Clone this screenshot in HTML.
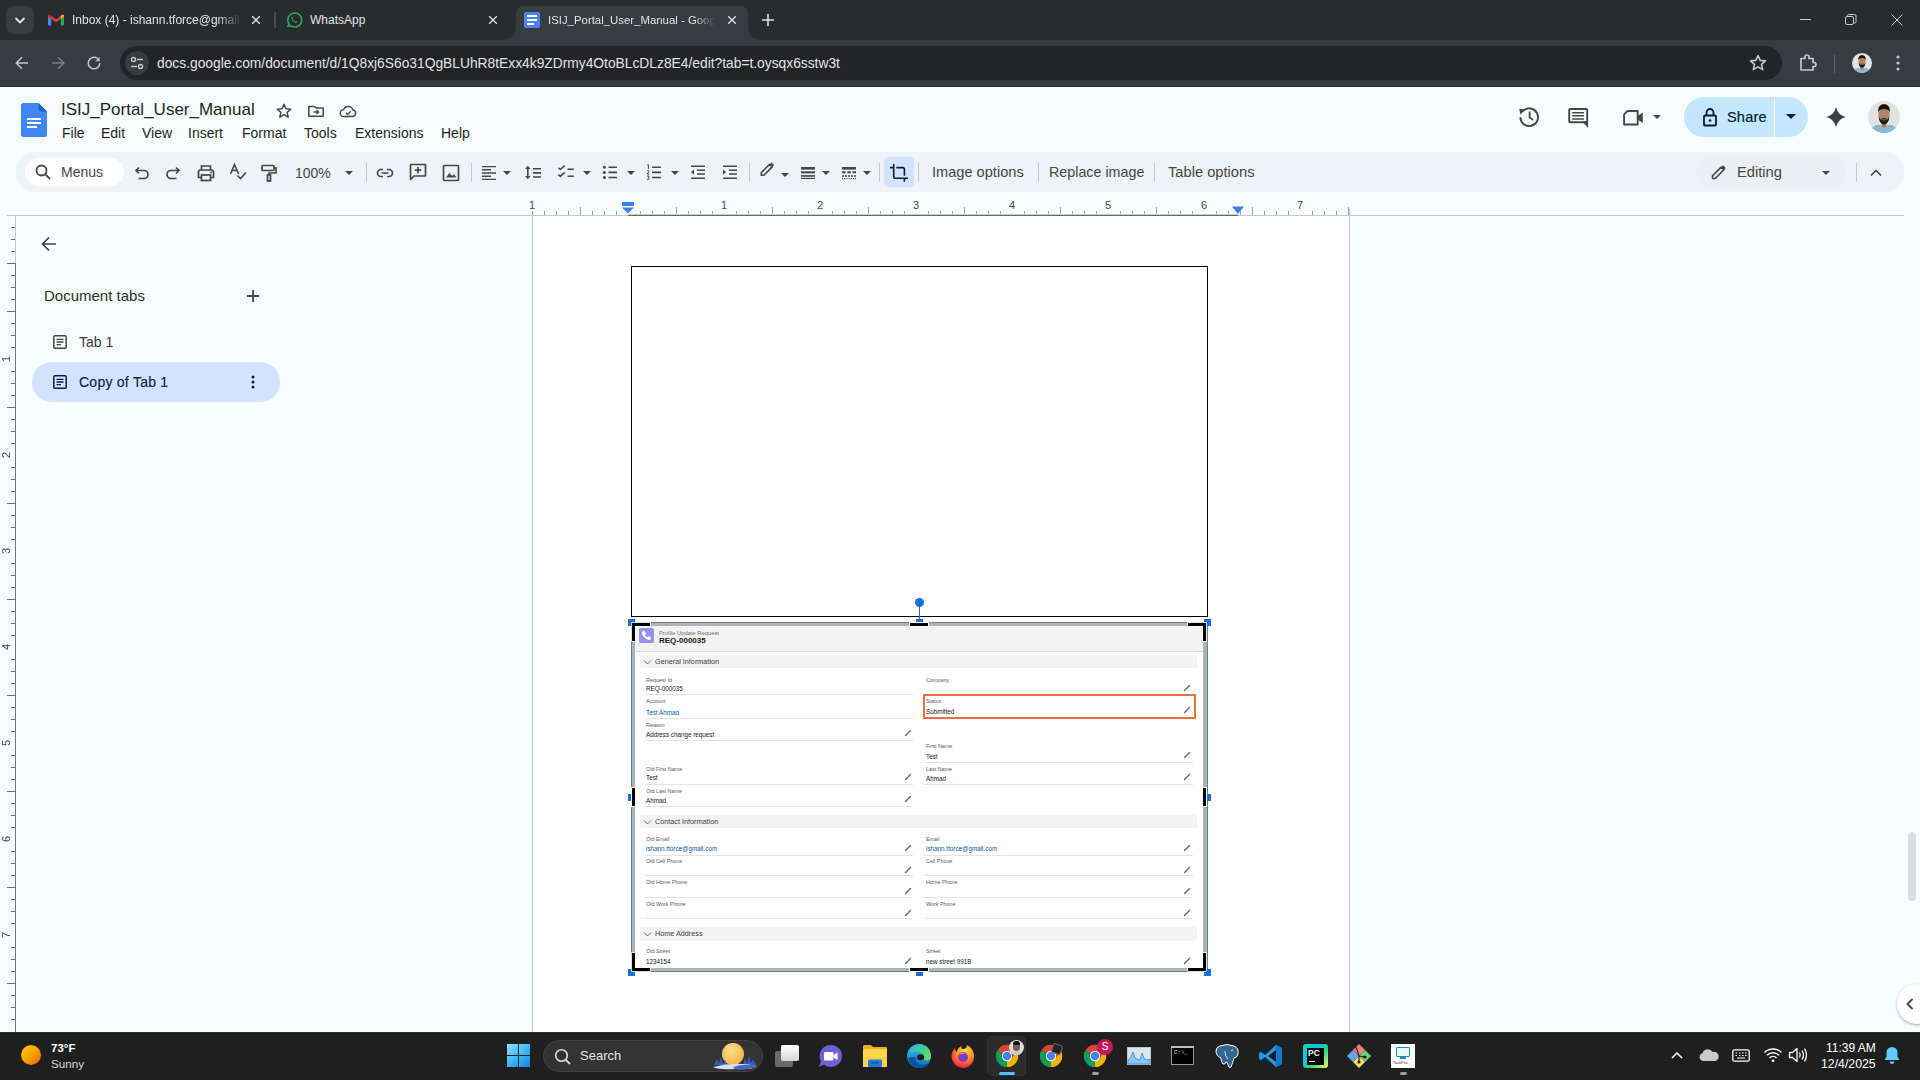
<!DOCTYPE html>
<html><head><meta charset="utf-8">
<style>
*{margin:0;padding:0;box-sizing:border-box}
html,body{width:1920px;height:1080px;overflow:hidden;background:#f9fbfd;font-family:"Liberation Sans",sans-serif}
.a{position:absolute}
svg{position:absolute;overflow:visible}
#titlebar{left:0;top:0;width:1920px;height:40px;background:#292c2f}
#toolbar{left:0;top:40px;width:1920px;height:47px;background:#383b40}
.tabtxt{font-size:12px;color:#e3e3e3;white-space:nowrap;overflow:hidden;top:12px;line-height:16px}
.menu{font-size:14px;color:#1f1f1f;top:125px;line-height:16px}
.rn{font-size:11px;line-height:12px;width:20px;text-align:center;color:#444746}
.vn{font-size:11px;line-height:12px;width:12px;height:20px;text-align:center;color:#444746;writing-mode:vertical-rl;transform:rotate(180deg)}
.tb{font-size:14px;color:#444746;line-height:16px}
</style></head><body>
<!-- CHROME TITLE BAR -->
<div id="titlebar" class="a"></div>
<div class="a" style="left:6px;top:6px;width:28px;height:28px;border-radius:8px;background:#3a3b3d"></div>
<svg style="left:0;top:0" width="40" height="40"><path d="M15.5 18 L20 22.5 L24.5 18" stroke="#e8eaed" stroke-width="1.8" fill="none"/></svg>

<!-- tab 1 gmail -->
<svg style="left:48px;top:14px" width="16" height="12" viewBox="0 0 16 12">
<path d="M0 2.2Q0 .6 1.4 .9L3.2 2.3V11.5H.9Q0 11.5 0 10.6Z" fill="#4285f4"/>
<path d="M16 2.2Q16 .6 14.6 .9L12.8 2.3V11.5H15.1Q16 11.5 16 10.6Z" fill="#34a853"/>
<path d="M.3 1.2Q1 .3 2 1L8 5.6L14 1Q15 .3 15.7 1.2L16 2.2L8 8.3L0 2.2Z" fill="#ea4335"/>
<path d="M12.8 2L14 1Q15 .3 15.7 1.2L16 2.2L12.8 4.6Z" fill="#fbbc04"/>
<path d="M0 2.2L.3 1.2Q1 .3 2 1L3.2 2V4.6Z" fill="#c5221f"/>
</svg>
<div class="a tabtxt" style="left:72px;width:170px;-webkit-mask-image:linear-gradient(90deg,#000 85%,transparent)">Inbox (4) - ishann.tforce@gmail.com</div>
<svg style="left:250px;top:14px" width="12" height="12"><path d="M2.2 2.2L9.8 9.8M9.8 2.2L2.2 9.8" stroke="#e3e3e3" stroke-width="1.3"/></svg>
<div class="a" style="left:274px;top:12px;width:2px;height:16px;background:#4a4d51"></div>
<!-- tab 2 whatsapp -->
<svg style="left:286px;top:12px" width="16" height="16" viewBox="0 0 16 16">
<path d="M3.2 12.2 A7 7 0 1 1 4.6 13.6 L1.8 14.4 Z" stroke="#25a85a" stroke-width="1.6" fill="none" stroke-linejoin="round"/>
<path d="M5.6 5.2c.3-.6.8-.6 1 0l.5 1.2c.1.3-.4.7-.4.9.4.9 1.2 1.7 2.1 2.1.2 0 .6-.5.9-.4l1.2.5c.5.3.4.8-.1 1.1-1.6 1-5.9-2.6-5.2-5.4z" fill="#25a85a"/>
</svg>
<div class="a tabtxt" style="left:310px;width:120px">WhatsApp</div>
<svg style="left:487px;top:14px" width="12" height="12"><path d="M2.2 2.2L9.8 9.8M9.8 2.2L2.2 9.8" stroke="#e3e3e3" stroke-width="1.3"/></svg>
<!-- active tab -->
<svg style="left:500px;top:6px" width="280" height="34" viewBox="0 0 280 34">
<path d="M0 34 Q16 34 16 20 V8 Q16 0 24 0 H240 Q248 0 248 8 V20 Q248 34 264 34 Z" fill="#383b40"/>
</svg>
<div class="a" style="left:524px;top:12px;width:16px;height:16px;border-radius:2px;background:#4a86e8"></div>
<div class="a" style="left:527px;top:15px;width:10px;height:2px;background:#fff"></div>
<div class="a" style="left:527px;top:19px;width:10px;height:2px;background:#fff"></div>
<div class="a" style="left:527px;top:23px;width:7px;height:2px;background:#fff"></div>
<div class="a tabtxt" style="left:548px;width:167px;font-size:11.4px;-webkit-mask-image:linear-gradient(90deg,#000 88%,transparent)">ISIJ_Portal_User_Manual - Google Docs</div>
<svg style="left:726px;top:14px" width="12" height="12"><path d="M2.2 2.2L9.8 9.8M9.8 2.2L2.2 9.8" stroke="#e3e3e3" stroke-width="1.3"/></svg>
<svg style="left:760px;top:12px" width="16" height="16"><path d="M8 2V14M2 8H14" stroke="#e3e3e3" stroke-width="1.6"/></svg>
<!-- window controls -->
<div class="a" style="left:1800px;top:19px;width:11px;height:1px;background:#c8c8c8"></div>
<svg style="left:1845px;top:14px" width="12" height="12"><rect x="0.5" y="2.5" width="8" height="8" rx="1.5" stroke="#c8c8c8" fill="none"/><path d="M2.5 2.5V1.8Q2.5 .5 3.8 .5H9.7Q11 .5 11 1.8V7.7Q11 9 9.7 9H9" stroke="#c8c8c8" fill="none"/></svg>
<svg style="left:1891px;top:14px" width="12" height="12"><path d="M.5 .5L11.5 11.5M11.5 .5L.5 11.5" stroke="#c8c8c8" stroke-width="1"/></svg>

<!-- CHROME TOOLBAR -->
<div id="toolbar" class="a"></div>
<div class="a" style="left:0;top:86px;width:1920px;height:1px;background:#2a2c30"></div>
<svg style="left:12px;top:53px" width="20" height="20"><path d="M16 10H4.5M10 4.2L4.2 10L10 15.8" stroke="#c7c7c7" stroke-width="1.5" fill="none"/></svg>
<svg style="left:48px;top:53px" width="20" height="20"><path d="M4 10H15.5M10 4.2L15.8 10L10 15.8" stroke="#7d7f83" stroke-width="1.5" fill="none"/></svg>
<svg style="left:84px;top:53px" width="20" height="20"><path d="M15.8 10A5.8 5.8 0 1 1 13.6 5.5" stroke="#c7c7c7" stroke-width="1.5" fill="none"/><path d="M15.6 3.8V8.2H11.2Z" fill="#c7c7c7"/></svg>
<div class="a" style="left:120px;top:46px;width:1662px;height:34px;border-radius:17px;background:#222428"></div>
<div class="a" style="left:125px;top:51px;width:24px;height:24px;border-radius:12px;background:#383b40"></div>
<svg style="left:129px;top:55px" width="16" height="16"><circle cx="4.5" cy="4.5" r="2" stroke="#c7c7c7" stroke-width="1.4" fill="none"/><path d="M8 4.5H14" stroke="#c7c7c7" stroke-width="1.4"/><circle cx="11.5" cy="11.5" r="2" stroke="#c7c7c7" stroke-width="1.4" fill="none"/><path d="M2 11.5H8" stroke="#c7c7c7" stroke-width="1.4"/></svg>
<div class="a" style="left:157px;top:55px;font-size:13.8px;line-height:17px;color:#e3e3e3;white-space:nowrap">docs.google.com/document/d/1Q8xj6S6o31QgBLUhR8tExx4k9ZDrmy4OtoBLcDLz8E4/edit?tab=t.oysqx6sstw3t</div>
<svg style="left:1748px;top:53px" width="20" height="20"><path d="M10 2.5L12.2 7.4L17.5 7.9L13.5 11.4L14.7 16.6L10 13.9L5.3 16.6L6.5 11.4L2.5 7.9L7.8 7.4Z" stroke="#c7c7c7" stroke-width="1.6" fill="none" stroke-linejoin="round"/></svg>
<svg style="left:1798px;top:53px" width="20" height="20"><path d="M3 5.5H7V4A2 2 0 0 1 11 4V5.5H15V9.5H16A2 2 0 0 1 16 13.5H15V17H3Z" stroke="#c7c7c7" stroke-width="1.7" fill="none" stroke-linejoin="round"/></svg>
<div class="a" style="left:1834px;top:55px;width:1px;height:18px;background:#5f6368"></div>
<svg style="left:1852px;top:53px" width="20" height="20" viewBox="0 0 32 32"><defs><clipPath id="c1852"><circle cx="16" cy="16" r="16"/></clipPath></defs><g clip-path="url(#c1852)"><rect width="32" height="32" fill="#e2e2e0"/><path d="M2 32Q3 25 10 23.5L16 26L22 23.5Q29 25 30 32Z" fill="#8db6d6"/><path d="M13.5 20H18.5V25L16 27L13.5 25Z" fill="#a57a60"/><ellipse cx="16" cy="14" rx="5.6" ry="7.5" fill="#b08468"/><path d="M10 12Q9.5 3.5 16 3Q22.5 3.5 22 12Q21 8 16 8Q11 8 10 12Z" fill="#17120f"/><path d="M10.6 15Q11 23 16 23.5Q21 23 21.4 15Q20.5 19 16 19.5Q11.5 19 10.6 15Z" fill="#241a15"/><path d="M13.5 18.2Q16 17.2 18.5 18.2" stroke="#241a15" stroke-width="1.2" fill="none"/></g></svg>
<svg style="left:1888px;top:53px" width="20" height="20"><circle cx="10" cy="4" r="1.6" fill="#c7c7c7"/><circle cx="10" cy="10" r="1.6" fill="#c7c7c7"/><circle cx="10" cy="16" r="1.6" fill="#c7c7c7"/></svg>

<!-- DOCS HEADER -->
<div class="a" style="left:0;top:87px;width:1920px;height:993px;background:#f7fcfc"></div>
<svg style="left:21px;top:103px" width="26" height="34" viewBox="0 0 26 34">
<path d="M2.5 0H17.5L26 8.5V31.5A2.5 2.5 0 0 1 23.5 34H2.5A2.5 2.5 0 0 1 0 31.5V2.5A2.5 2.5 0 0 1 2.5 0Z" fill="#4285f4"/>
<path d="M17.5 0V6A2.5 2.5 0 0 0 20 8.5H26Z" fill="#1f5fd6"/>
<rect x="6" y="15" width="14" height="2" fill="#fff"/><rect x="6" y="19" width="14" height="2" fill="#fff"/><rect x="6" y="23" width="10" height="2" fill="#fff"/>
</svg>
<div class="a" style="left:61px;top:100px;font-size:17px;line-height:20px;color:#1f1f1f">ISIJ_Portal_User_Manual</div>
<svg style="left:275px;top:102px" width="18" height="18"><path d="M9 2.2L10.9 6.8L15.8 7.2L12.1 10.4L13.2 15.2L9 12.7L4.8 15.2L5.9 10.4L2.2 7.2L7.1 6.8Z" stroke="#444746" stroke-width="1.5" fill="none" stroke-linejoin="round"/></svg>
<svg style="left:307px;top:102px" width="18" height="18"><path d="M1.8 4.5V14.2H16.2V6H9L7.5 4.5Z" stroke="#444746" stroke-width="1.5" fill="none" stroke-linejoin="round"/><path d="M6.5 10H11.5M9.5 8L11.5 10L9.5 12" stroke="#444746" stroke-width="1.4" fill="none"/></svg>
<svg style="left:339px;top:102px" width="18" height="18"><path d="M5 14.5A3.5 3.5 0 0 1 4.6 7.5A5 5 0 0 1 14 8A3.3 3.3 0 0 1 13.8 14.5Z" stroke="#444746" stroke-width="1.5" fill="none"/><path d="M6.8 10.8L8.6 12.5L11.8 9.2" stroke="#444746" stroke-width="1.4" fill="none"/></svg>
<div class="a menu" style="left:62px">File</div>
<div class="a menu" style="left:101px">Edit</div>
<div class="a menu" style="left:142px">View</div>
<div class="a menu" style="left:188px">Insert</div>
<div class="a menu" style="left:242px">Format</div>
<div class="a menu" style="left:304px">Tools</div>
<div class="a menu" style="left:355px">Extensions</div>
<div class="a menu" style="left:441px">Help</div>

<!-- header right -->
<svg style="left:1518px;top:106px" width="22" height="22" viewBox="0 0 22 22"><path d="M2.4 11.2A8.8 8.8 0 1 0 5.2 4.8" stroke="#444746" stroke-width="1.9" fill="none"/><path d="M1.2 2.8L7.6 3.6L2.4 8.6Z" fill="#444746"/><path d="M11.6 5.6V11.4L15 14" stroke="#444746" stroke-width="1.8" fill="none"/></svg>
<svg style="left:1567px;top:106px" width="22" height="24" viewBox="0 0 22 24"><rect x="2.2" y="3" width="18" height="13.2" rx="1" stroke="#444746" stroke-width="1.9" fill="none"/><path d="M15 15.3H21.1V21.8Z" fill="#444746"/><path d="M5.2 6.8H16.9M5.2 9.8H16.9M5.2 12.9H16.9" stroke="#444746" stroke-width="1.5"/></svg>
<svg style="left:1621px;top:106px" width="24" height="22" viewBox="0 0 24 22"><path d="M6.5 5H16.7V18.5H3.1V8.4Z" stroke="#444746" stroke-width="1.9" fill="none" stroke-linejoin="round"/><path d="M16.7 10L21.8 6.5V17L16.7 13.5Z" fill="#444746"/></svg>
<svg style="left:1652px;top:114px" width="10" height="6"><path d="M1 1H9L5 5Z" fill="#444746"/></svg>
<div class="a" style="left:1684px;top:97px;width:124px;height:40px;border-radius:20px;background:#c2e7ff"></div>
<div class="a" style="left:1774px;top:97px;width:1px;height:40px;background:#f9fbfd"></div>
<svg style="left:1701px;top:107px" width="18" height="20" viewBox="0 0 18 20"><rect x="3" y="8.5" width="12" height="10" rx="1" stroke="#001d35" stroke-width="1.8" fill="none"/><path d="M5.5 8.5V5.5A3.5 3.5 0 0 1 12.5 5.5V8.5" stroke="#001d35" stroke-width="1.8" fill="none"/><circle cx="9" cy="13.5" r="1.3" fill="#001d35"/></svg>
<div class="a" style="left:1727px;top:109px;font-size:14.5px;line-height:16px;color:#001d35;font-weight:400;-webkit-text-stroke:0.2px #001d35;letter-spacing:0.2px">Share</div>
<svg style="left:1785px;top:114px" width="12" height="6"><path d="M1 0H11L6 5Z" fill="#001d35"/></svg>
<svg style="left:1825px;top:106px" width="22" height="22" viewBox="0 0 22 22"><path d="M11 1Q12.8 9.2 21 11Q12.8 12.8 11 21Q9.2 12.8 1 11Q9.2 9.2 11 1Z" fill="#3c4043"/></svg>
<svg style="left:1868px;top:101px" width="32" height="32" viewBox="0 0 32 32"><defs><clipPath id="c1868"><circle cx="16" cy="16" r="16"/></clipPath></defs><g clip-path="url(#c1868)"><rect width="32" height="32" fill="#e2e2e0"/><path d="M2 32Q3 25 10 23.5L16 26L22 23.5Q29 25 30 32Z" fill="#8db6d6"/><path d="M13.5 20H18.5V25L16 27L13.5 25Z" fill="#a57a60"/><ellipse cx="16" cy="14" rx="5.6" ry="7.5" fill="#b08468"/><path d="M10 12Q9.5 3.5 16 3Q22.5 3.5 22 12Q21 8 16 8Q11 8 10 12Z" fill="#17120f"/><path d="M10.6 15Q11 23 16 23.5Q21 23 21.4 15Q20.5 19 16 19.5Q11.5 19 10.6 15Z" fill="#241a15"/><path d="M13.5 18.2Q16 17.2 18.5 18.2" stroke="#241a15" stroke-width="1.2" fill="none"/></g></svg>

<!-- DOCS TOOLBAR -->
<div class="a" style="left:16px;top:152px;width:1888px;height:40px;border-radius:20px;background:#edf3f6"></div>
<div class="a" style="left:25px;top:158px;width:99px;height:28px;border-radius:14px;background:#fff"></div>
<svg style="left:34px;top:163px" width="18" height="18"><circle cx="7.5" cy="7.5" r="5" stroke="#444746" stroke-width="1.8" fill="none"/><path d="M11 11L16 16" stroke="#444746" stroke-width="1.8"/></svg>
<div class="a tb" style="left:61px;top:164px">Menus</div>
<svg style="left:132px;top:163px" width="20" height="20" viewBox="0 0 20 20"><path d="M4 7.5H12A4 4 0 0 1 12 15.5H6.5" stroke="#444746" stroke-width="1.7" fill="none"/><path d="M7 4.5L4 7.5L7 10.5" stroke="#444746" stroke-width="1.7" fill="none"/></svg>
<svg style="left:163px;top:163px" width="20" height="20" viewBox="0 0 20 20"><path d="M16 7.5H8A4 4 0 0 0 8 15.5H13.5" stroke="#444746" stroke-width="1.7" fill="none"/><path d="M13 4.5L16 7.5L13 10.5" stroke="#444746" stroke-width="1.7" fill="none"/></svg>
<svg style="left:196px;top:163px" width="20" height="20" viewBox="0 0 20 20"><path d="M5.5 7V3H14.5V7" stroke="#444746" stroke-width="1.7" fill="none"/><path d="M5.5 14.5H2.5V9A2 2 0 0 1 4.5 7H15.5A2 2 0 0 1 17.5 9V14.5H14.5" stroke="#444746" stroke-width="1.7" fill="none"/><rect x="5.5" y="12" width="9" height="5.5" stroke="#444746" stroke-width="1.7" fill="none"/><circle cx="15" cy="9.5" r=".9" fill="#444746"/></svg>
<svg style="left:228px;top:162px" width="20" height="20" viewBox="0 0 20 20"><path d="M2.5 12L6.5 2.5L10.5 12M4 8.5H9" stroke="#444746" stroke-width="1.6" fill="none"/><path d="M9.5 13.5L12.5 16.5L18 10.5" stroke="#444746" stroke-width="1.6" fill="none"/></svg>
<svg style="left:259px;top:163px" width="20" height="20" viewBox="0 0 20 20"><rect x="3" y="2.5" width="12" height="5" rx="1" stroke="#444746" stroke-width="1.7" fill="none"/><path d="M15 5H17V10H10V12" stroke="#444746" stroke-width="1.7" fill="none"/><rect x="8.5" y="12" width="3" height="6" stroke="#444746" stroke-width="1.7" fill="none"/></svg>
<div class="a tb" style="left:295px;top:165px">100%</div>
<svg style="left:344px;top:170px" width="10" height="6"><path d="M1 1H9L5 5Z" fill="#444746"/></svg>
<div class="a" style="left:366px;top:163px;width:1px;height:19px;background:#c7c7c7"></div>
<svg style="left:375px;top:163px" width="20" height="20" viewBox="0 0 20 20"><path d="M8 6.5H6A3.5 3.5 0 0 0 6 13.5H8M12 6.5H14A3.5 3.5 0 0 1 14 13.5H12M6.5 10H13.5" stroke="#444746" stroke-width="1.7" fill="none"/></svg>
<svg style="left:408px;top:162px" width="20" height="20" viewBox="0 0 20 20"><path d="M2.5 2.5H17.5V14H6L2.5 17.5Z" stroke="#444746" stroke-width="1.7" fill="none" stroke-linejoin="round"/><path d="M10 5V11.5M6.8 8.2H13.2" stroke="#444746" stroke-width="1.7"/></svg>
<svg style="left:441px;top:163px" width="20" height="20" viewBox="0 0 20 20"><rect x="2.5" y="2.5" width="15" height="15" rx="1" stroke="#444746" stroke-width="1.7" fill="none"/><path d="M5 14.5L8.5 10L11 13L13 11L15.5 14.5Z" fill="#444746"/></svg>
<div class="a" style="left:471px;top:163px;width:1px;height:19px;background:#c7c7c7"></div>
<svg style="left:480px;top:164px" width="18" height="18" viewBox="0 0 18 18"><path d="M2 2.6H16M2 5.8H11M2 9H16M2 12.2H11M2 15.4H16" stroke="#444746" stroke-width="1.4"/></svg>
<svg style="left:502px;top:170px" width="10" height="6"><path d="M1 1H9L5 5Z" fill="#444746"/></svg>
<svg style="left:523px;top:163px" width="20" height="20" viewBox="0 0 20 20"><path d="M4.8 5V14" stroke="#444746" stroke-width="1.6"/><path d="M2 6L4.8 2.8L7.6 6Z M2 13L4.8 16.2L7.6 13Z" fill="#444746"/><path d="M10 5.8H18M10 9.9H18M10 14H18" stroke="#444746" stroke-width="1.6"/></svg>
<svg style="left:556px;top:163px" width="20" height="20" viewBox="0 0 20 20"><path d="M2.4 4.8L4.4 6.6L8.6 2.6M2.4 11.6L4.4 13.4L8.6 9.4" stroke="#444746" stroke-width="1.5" fill="none"/><path d="M11.5 6.3H17.8M11.5 13.3H17.8" stroke="#444746" stroke-width="1.6"/></svg>
<svg style="left:582px;top:170px" width="10" height="6"><path d="M1 1H9L5 5Z" fill="#444746"/></svg>
<svg style="left:600px;top:163px" width="20" height="20" viewBox="0 0 20 20"><circle cx="4.4" cy="4.3" r="1.5" fill="#444746"/><circle cx="4.4" cy="9.4" r="1.5" fill="#444746"/><circle cx="4.4" cy="14.5" r="1.5" fill="#444746"/><path d="M8.5 4.3H17M8.5 9.4H17M8.5 14.5H17" stroke="#444746" stroke-width="1.6"/></svg>
<svg style="left:626px;top:170px" width="10" height="6"><path d="M1 1H9L5 5Z" fill="#444746"/></svg>
<svg style="left:644px;top:163px" width="20" height="20" viewBox="0 0 20 20"><path d="M3.2 2.2L4.4 1.6V6" stroke="#444746" stroke-width="1" fill="none"/><path d="M3 8.2Q3.4 7.4 4.3 7.5Q5.3 7.7 4.9 8.8L3 11H5.4" stroke="#444746" stroke-width="1" fill="none"/><path d="M3 13H5.2L4 14.5Q5.4 14.6 5.2 15.9Q4.8 17 3 16.6" stroke="#444746" stroke-width="1" fill="none"/><path d="M8 4.3H17M8 9.4H17M8 14.5H17" stroke="#444746" stroke-width="1.6"/></svg>
<svg style="left:670px;top:170px" width="10" height="6"><path d="M1 1H9L5 5Z" fill="#444746"/></svg>
<svg style="left:688px;top:163px" width="20" height="20" viewBox="0 0 20 20"><path d="M3 3.2H17M9 7.2H17M9 11H17M3 15.2H17" stroke="#444746" stroke-width="1.6"/><path d="M6 6.5L3 9.1L6 11.7Z" fill="#444746"/></svg>
<svg style="left:720px;top:163px" width="20" height="20" viewBox="0 0 20 20"><path d="M3 3.2H17M9 7.2H17M9 11H17M3 15.2H17" stroke="#444746" stroke-width="1.6"/><path d="M3 6.5L6 9.1L3 11.7Z" fill="#444746"/></svg>
<div class="a" style="left:749px;top:163px;width:1px;height:19px;background:#c7c7c7"></div>
<svg style="left:759px;top:161px" width="16" height="16" viewBox="0 0 16 16"><path d="M2.3 14.2V11.6L10.6 3.3L13.2 5.9L4.9 14.2Z" stroke="#444746" stroke-width="1.6" fill="none" stroke-linejoin="round"/><path d="M11.8 2.1L14.4 4.7" stroke="#444746" stroke-width="2"/></svg>
<svg style="left:780px;top:172px" width="10" height="6"><path d="M1 1H9L5 5Z" fill="#444746"/></svg>
<svg style="left:801px;top:166px" width="14" height="14" viewBox="0 0 14 14"><rect x="0" y="1" width="14" height="2.6" fill="#444746"/><rect x="0" y="5.3" width="14" height="2.1" fill="#444746"/><rect x="0" y="9.1" width="14" height="1.7" fill="#444746"/><rect x="0" y="11.8" width="14" height="1.2" fill="#444746"/></svg>
<svg style="left:821px;top:170px" width="10" height="6"><path d="M1 1H9L5 5Z" fill="#444746"/></svg>
<svg style="left:842px;top:166px" width="14" height="14" viewBox="0 0 14 14"><rect x="0" y="1" width="14" height="2.6" fill="#444746"/><path d="M0 6.3H3.5M5.2 6.3H8.8M10.5 6.3H14" stroke="#444746" stroke-width="2"/><path d="M0 10H2M3 10H5M6 10H8M9 10H11M12 10H14" stroke="#444746" stroke-width="1.6"/><path d="M0 12.6H1M2.2 12.6H3.2M4.4 12.6H5.4M6.6 12.6H7.6M8.8 12.6H9.8M11 12.6H12M13 12.6H14" stroke="#444746" stroke-width="1.2"/></svg>
<svg style="left:862px;top:170px" width="10" height="6"><path d="M1 1H9L5 5Z" fill="#444746"/></svg>
<div class="a" style="left:879px;top:163px;width:1px;height:19px;background:#c7c7c7"></div>
<div class="a" style="left:884px;top:157px;width:30px;height:30px;border-radius:4px;background:#d3e3fd"></div>
<svg style="left:889px;top:163px" width="20" height="20" viewBox="0 0 20 20"><path d="M1 4.6H4.7M4.7 1V13.5Q4.7 15.25 6.5 15.25H19M7.3 4.6H13.6Q15.4 4.6 15.4 6.4V12.8M15.4 15.25V18.8" stroke="#0b1d3a" stroke-width="1.6" fill="none"/></svg>
<div class="a" style="left:918px;top:163px;width:1px;height:19px;background:#c7c7c7"></div>
<div class="a tb" style="left:932px;top:164px;font-size:14.6px">Image options</div>
<div class="a" style="left:1038px;top:163px;width:1px;height:19px;background:#c7c7c7"></div>
<div class="a tb" style="left:1049px;top:164px;font-size:14.3px">Replace image</div>
<div class="a" style="left:1154px;top:163px;width:1px;height:19px;background:#c7c7c7"></div>
<div class="a tb" style="left:1168px;top:164px;font-size:14.7px">Table options</div>
<div class="a" style="left:1696px;top:157px;width:150px;height:30px;border-radius:15px;background:#ebf0f6"></div>
<svg style="left:1710px;top:163px" width="18" height="18" viewBox="0 0 18 18"><path d="M2.5 15.5V12.8L11.2 4.1L13.9 6.8L5.2 15.5Z" stroke="#444746" stroke-width="1.6" fill="none" stroke-linejoin="round"/><path d="M12.2 3.1L14.9 5.8" stroke="#444746" stroke-width="2.4"/></svg>
<div class="a tb" style="left:1737px;top:164px;font-size:14.7px">Editing</div>
<svg style="left:1821px;top:170px" width="10" height="6"><path d="M1 1H9L5 5Z" fill="#444746"/></svg>
<div class="a" style="left:1856px;top:163px;width:1px;height:19px;background:#c7c7c7"></div>
<svg style="left:1867px;top:164px" width="18" height="18"><path d="M4 11.5L9 6.5L14 11.5" stroke="#444746" stroke-width="1.7" fill="none"/></svg>
<!-- RULERS -->
<div class="a" style="left:7px;top:215px;width:1897px;height:1px;background:#c7c7c7"></div>
<div class="a" style="left:544px;top:211px;width:1px;height:4px;background:#9aa0a6"></div>
<div class="a" style="left:556px;top:211px;width:1px;height:4px;background:#9aa0a6"></div>
<div class="a" style="left:568px;top:211px;width:1px;height:4px;background:#9aa0a6"></div>
<div class="a" style="left:580px;top:207px;width:1px;height:8px;background:#9aa0a6"></div>
<div class="a" style="left:592px;top:211px;width:1px;height:4px;background:#9aa0a6"></div>
<div class="a" style="left:604px;top:211px;width:1px;height:4px;background:#9aa0a6"></div>
<div class="a" style="left:616px;top:211px;width:1px;height:4px;background:#9aa0a6"></div>
<div class="a" style="left:640px;top:211px;width:1px;height:4px;background:#9aa0a6"></div>
<div class="a" style="left:652px;top:211px;width:1px;height:4px;background:#9aa0a6"></div>
<div class="a" style="left:664px;top:211px;width:1px;height:4px;background:#9aa0a6"></div>
<div class="a" style="left:676px;top:207px;width:1px;height:8px;background:#9aa0a6"></div>
<div class="a" style="left:688px;top:211px;width:1px;height:4px;background:#9aa0a6"></div>
<div class="a" style="left:700px;top:211px;width:1px;height:4px;background:#9aa0a6"></div>
<div class="a" style="left:712px;top:211px;width:1px;height:4px;background:#9aa0a6"></div>
<div class="a" style="left:736px;top:211px;width:1px;height:4px;background:#9aa0a6"></div>
<div class="a" style="left:748px;top:211px;width:1px;height:4px;background:#9aa0a6"></div>
<div class="a" style="left:760px;top:211px;width:1px;height:4px;background:#9aa0a6"></div>
<div class="a" style="left:772px;top:207px;width:1px;height:8px;background:#9aa0a6"></div>
<div class="a" style="left:784px;top:211px;width:1px;height:4px;background:#9aa0a6"></div>
<div class="a" style="left:796px;top:211px;width:1px;height:4px;background:#9aa0a6"></div>
<div class="a" style="left:808px;top:211px;width:1px;height:4px;background:#9aa0a6"></div>
<div class="a" style="left:832px;top:211px;width:1px;height:4px;background:#9aa0a6"></div>
<div class="a" style="left:844px;top:211px;width:1px;height:4px;background:#9aa0a6"></div>
<div class="a" style="left:856px;top:211px;width:1px;height:4px;background:#9aa0a6"></div>
<div class="a" style="left:868px;top:207px;width:1px;height:8px;background:#9aa0a6"></div>
<div class="a" style="left:880px;top:211px;width:1px;height:4px;background:#9aa0a6"></div>
<div class="a" style="left:892px;top:211px;width:1px;height:4px;background:#9aa0a6"></div>
<div class="a" style="left:904px;top:211px;width:1px;height:4px;background:#9aa0a6"></div>
<div class="a" style="left:928px;top:211px;width:1px;height:4px;background:#9aa0a6"></div>
<div class="a" style="left:940px;top:211px;width:1px;height:4px;background:#9aa0a6"></div>
<div class="a" style="left:952px;top:211px;width:1px;height:4px;background:#9aa0a6"></div>
<div class="a" style="left:964px;top:207px;width:1px;height:8px;background:#9aa0a6"></div>
<div class="a" style="left:976px;top:211px;width:1px;height:4px;background:#9aa0a6"></div>
<div class="a" style="left:988px;top:211px;width:1px;height:4px;background:#9aa0a6"></div>
<div class="a" style="left:1000px;top:211px;width:1px;height:4px;background:#9aa0a6"></div>
<div class="a" style="left:1024px;top:211px;width:1px;height:4px;background:#9aa0a6"></div>
<div class="a" style="left:1036px;top:211px;width:1px;height:4px;background:#9aa0a6"></div>
<div class="a" style="left:1048px;top:211px;width:1px;height:4px;background:#9aa0a6"></div>
<div class="a" style="left:1060px;top:207px;width:1px;height:8px;background:#9aa0a6"></div>
<div class="a" style="left:1072px;top:211px;width:1px;height:4px;background:#9aa0a6"></div>
<div class="a" style="left:1084px;top:211px;width:1px;height:4px;background:#9aa0a6"></div>
<div class="a" style="left:1096px;top:211px;width:1px;height:4px;background:#9aa0a6"></div>
<div class="a" style="left:1120px;top:211px;width:1px;height:4px;background:#9aa0a6"></div>
<div class="a" style="left:1132px;top:211px;width:1px;height:4px;background:#9aa0a6"></div>
<div class="a" style="left:1144px;top:211px;width:1px;height:4px;background:#9aa0a6"></div>
<div class="a" style="left:1156px;top:207px;width:1px;height:8px;background:#9aa0a6"></div>
<div class="a" style="left:1168px;top:211px;width:1px;height:4px;background:#9aa0a6"></div>
<div class="a" style="left:1180px;top:211px;width:1px;height:4px;background:#9aa0a6"></div>
<div class="a" style="left:1192px;top:211px;width:1px;height:4px;background:#9aa0a6"></div>
<div class="a" style="left:1216px;top:211px;width:1px;height:4px;background:#9aa0a6"></div>
<div class="a" style="left:1228px;top:211px;width:1px;height:4px;background:#9aa0a6"></div>
<div class="a" style="left:1240px;top:211px;width:1px;height:4px;background:#9aa0a6"></div>
<div class="a" style="left:1252px;top:207px;width:1px;height:8px;background:#9aa0a6"></div>
<div class="a" style="left:1264px;top:211px;width:1px;height:4px;background:#9aa0a6"></div>
<div class="a" style="left:1276px;top:211px;width:1px;height:4px;background:#9aa0a6"></div>
<div class="a" style="left:1288px;top:211px;width:1px;height:4px;background:#9aa0a6"></div>
<div class="a" style="left:1312px;top:211px;width:1px;height:4px;background:#9aa0a6"></div>
<div class="a" style="left:1324px;top:211px;width:1px;height:4px;background:#9aa0a6"></div>
<div class="a" style="left:1336px;top:211px;width:1px;height:4px;background:#9aa0a6"></div>
<div class="a" style="left:1348px;top:207px;width:1px;height:8px;background:#9aa0a6"></div>
<div class="a rn" style="left:522px;top:199px">1</div>
<div class="a rn" style="left:714px;top:199px">1</div>
<div class="a rn" style="left:810px;top:199px">2</div>
<div class="a rn" style="left:906px;top:199px">3</div>
<div class="a rn" style="left:1002px;top:199px">4</div>
<div class="a rn" style="left:1098px;top:199px">5</div>
<div class="a rn" style="left:1194px;top:199px">6</div>
<div class="a rn" style="left:1290px;top:199px">7</div>
<div class="a" style="left:532px;top:215px;width:1px;height:817px;background:#c7c7c7"></div>
<div class="a" style="left:1349px;top:209px;width:1px;height:823px;background:#c7c7c7"></div>
<div class="a" style="left:15px;top:215px;width:1px;height:817px;background:#74787d"></div>
<div class="a" style="left:15px;top:215px;width:1px;height:48px;background:#c7c7c7"></div>
<div class="a" style="left:11px;top:227px;width:4px;height:1px;background:#6b6e72"></div>
<div class="a" style="left:11px;top:239px;width:4px;height:1px;background:#6b6e72"></div>
<div class="a" style="left:11px;top:251px;width:4px;height:1px;background:#6b6e72"></div>
<div class="a" style="left:7px;top:263px;width:8px;height:1px;background:#6b6e72"></div>
<div class="a" style="left:11px;top:275px;width:4px;height:1px;background:#6b6e72"></div>
<div class="a" style="left:11px;top:287px;width:4px;height:1px;background:#6b6e72"></div>
<div class="a" style="left:11px;top:299px;width:4px;height:1px;background:#6b6e72"></div>
<div class="a" style="left:7px;top:311px;width:8px;height:1px;background:#6b6e72"></div>
<div class="a" style="left:11px;top:323px;width:4px;height:1px;background:#6b6e72"></div>
<div class="a" style="left:11px;top:335px;width:4px;height:1px;background:#6b6e72"></div>
<div class="a" style="left:11px;top:347px;width:4px;height:1px;background:#6b6e72"></div>
<div class="a" style="left:11px;top:371px;width:4px;height:1px;background:#6b6e72"></div>
<div class="a" style="left:11px;top:383px;width:4px;height:1px;background:#6b6e72"></div>
<div class="a" style="left:11px;top:395px;width:4px;height:1px;background:#6b6e72"></div>
<div class="a" style="left:7px;top:407px;width:8px;height:1px;background:#6b6e72"></div>
<div class="a" style="left:11px;top:419px;width:4px;height:1px;background:#6b6e72"></div>
<div class="a" style="left:11px;top:431px;width:4px;height:1px;background:#6b6e72"></div>
<div class="a" style="left:11px;top:443px;width:4px;height:1px;background:#6b6e72"></div>
<div class="a" style="left:11px;top:467px;width:4px;height:1px;background:#6b6e72"></div>
<div class="a" style="left:11px;top:479px;width:4px;height:1px;background:#6b6e72"></div>
<div class="a" style="left:11px;top:491px;width:4px;height:1px;background:#6b6e72"></div>
<div class="a" style="left:7px;top:503px;width:8px;height:1px;background:#6b6e72"></div>
<div class="a" style="left:11px;top:515px;width:4px;height:1px;background:#6b6e72"></div>
<div class="a" style="left:11px;top:527px;width:4px;height:1px;background:#6b6e72"></div>
<div class="a" style="left:11px;top:539px;width:4px;height:1px;background:#6b6e72"></div>
<div class="a" style="left:11px;top:563px;width:4px;height:1px;background:#6b6e72"></div>
<div class="a" style="left:11px;top:575px;width:4px;height:1px;background:#6b6e72"></div>
<div class="a" style="left:11px;top:587px;width:4px;height:1px;background:#6b6e72"></div>
<div class="a" style="left:7px;top:599px;width:8px;height:1px;background:#6b6e72"></div>
<div class="a" style="left:11px;top:611px;width:4px;height:1px;background:#6b6e72"></div>
<div class="a" style="left:11px;top:623px;width:4px;height:1px;background:#6b6e72"></div>
<div class="a" style="left:11px;top:635px;width:4px;height:1px;background:#6b6e72"></div>
<div class="a" style="left:11px;top:659px;width:4px;height:1px;background:#6b6e72"></div>
<div class="a" style="left:11px;top:671px;width:4px;height:1px;background:#6b6e72"></div>
<div class="a" style="left:11px;top:683px;width:4px;height:1px;background:#6b6e72"></div>
<div class="a" style="left:7px;top:695px;width:8px;height:1px;background:#6b6e72"></div>
<div class="a" style="left:11px;top:707px;width:4px;height:1px;background:#6b6e72"></div>
<div class="a" style="left:11px;top:719px;width:4px;height:1px;background:#6b6e72"></div>
<div class="a" style="left:11px;top:731px;width:4px;height:1px;background:#6b6e72"></div>
<div class="a" style="left:11px;top:755px;width:4px;height:1px;background:#6b6e72"></div>
<div class="a" style="left:11px;top:767px;width:4px;height:1px;background:#6b6e72"></div>
<div class="a" style="left:11px;top:779px;width:4px;height:1px;background:#6b6e72"></div>
<div class="a" style="left:7px;top:791px;width:8px;height:1px;background:#6b6e72"></div>
<div class="a" style="left:11px;top:803px;width:4px;height:1px;background:#6b6e72"></div>
<div class="a" style="left:11px;top:815px;width:4px;height:1px;background:#6b6e72"></div>
<div class="a" style="left:11px;top:827px;width:4px;height:1px;background:#6b6e72"></div>
<div class="a" style="left:11px;top:851px;width:4px;height:1px;background:#6b6e72"></div>
<div class="a" style="left:11px;top:863px;width:4px;height:1px;background:#6b6e72"></div>
<div class="a" style="left:11px;top:875px;width:4px;height:1px;background:#6b6e72"></div>
<div class="a" style="left:7px;top:887px;width:8px;height:1px;background:#6b6e72"></div>
<div class="a" style="left:11px;top:899px;width:4px;height:1px;background:#6b6e72"></div>
<div class="a" style="left:11px;top:911px;width:4px;height:1px;background:#6b6e72"></div>
<div class="a" style="left:11px;top:923px;width:4px;height:1px;background:#6b6e72"></div>
<div class="a" style="left:11px;top:947px;width:4px;height:1px;background:#6b6e72"></div>
<div class="a" style="left:11px;top:959px;width:4px;height:1px;background:#6b6e72"></div>
<div class="a" style="left:11px;top:971px;width:4px;height:1px;background:#6b6e72"></div>
<div class="a" style="left:7px;top:983px;width:8px;height:1px;background:#6b6e72"></div>
<div class="a" style="left:11px;top:995px;width:4px;height:1px;background:#6b6e72"></div>
<div class="a" style="left:11px;top:1007px;width:4px;height:1px;background:#6b6e72"></div>
<div class="a" style="left:11px;top:1019px;width:4px;height:1px;background:#6b6e72"></div>
<div class="a vn" style="left:0px;top:349px">1</div>
<div class="a vn" style="left:0px;top:445px">2</div>
<div class="a vn" style="left:0px;top:541px">3</div>
<div class="a vn" style="left:0px;top:637px">4</div>
<div class="a vn" style="left:0px;top:733px">5</div>
<div class="a vn" style="left:0px;top:829px">6</div>
<div class="a vn" style="left:0px;top:925px">7</div>
<div class="a" style="left:628px;top:215px;width:610px;height:1px;background:#64686c"></div><div class="a" style="left:628px;top:214px;width:610px;height:1px;background:#c9cccf"></div>
<div class="a" style="left:532px;top:211px;width:1px;height:4px;background:#9aa0a6"></div>
<svg style="left:621px;top:201px" width="14" height="15"><rect x="1" y="1" width="12" height="4" fill="#3f7ee8"/><path d="M1 6.5H13L7 12.5Z" fill="#3f7ee8"/></svg>
<svg style="left:1231px;top:206px" width="14" height="10"><path d="M1 0.5H13L7 8Z" fill="#3f7ee8"/></svg>
<!-- SIDEBAR -->
<svg style="left:41px;top:236px" width="16" height="16"><path d="M15 8H2M8 1.5L1.5 8L8 14.5" stroke="#444746" stroke-width="1.7" fill="none"/></svg>
<div class="a" style="left:44px;top:287px;font-size:15px;line-height:18px;color:#303030">Document tabs</div>
<svg style="left:245px;top:288px" width="16" height="16"><path d="M8 2V14M2 8H14" stroke="#444746" stroke-width="1.8"/></svg>
<svg style="left:53px;top:335px" width="14" height="14" viewBox="0 0 14 14"><rect x=".8" y=".8" width="12.4" height="12.4" rx="1" stroke="#444746" stroke-width="1.5" fill="none"/><path d="M3.5 4.3H10.5M3.5 7H10.5M3.5 9.7H8" stroke="#444746" stroke-width="1.3"/></svg>
<div class="a" style="left:79px;top:334px;font-size:14px;line-height:16px;color:#3a3a3a">Tab 1</div>
<div class="a" style="left:32px;top:362px;width:248px;height:40px;border-radius:20px;background:#d3e3fd"></div>
<svg style="left:53px;top:375px" width="14" height="14" viewBox="0 0 14 14"><rect x=".8" y=".8" width="12.4" height="12.4" rx="1" stroke="#041e49" stroke-width="1.5" fill="none"/><path d="M3.5 4.3H10.5M3.5 7H10.5M3.5 9.7H8" stroke="#041e49" stroke-width="1.3"/></svg>
<div class="a" style="left:79px;top:374px;font-size:14px;line-height:16px;color:#041e49;font-weight:400;-webkit-text-stroke:0.15px #041e49;letter-spacing:0.25px">Copy of Tab 1</div>
<svg style="left:245px;top:374px" width="16" height="16"><circle cx="8" cy="3" r="1.5" fill="#041e49"/><circle cx="8" cy="8" r="1.5" fill="#041e49"/><circle cx="8" cy="13" r="1.5" fill="#041e49"/></svg>
<!-- PAGE -->
<div class="a" style="left:533px;top:216px;width:816px;height:816px;background:#fff"></div>
<!-- blank image box -->
<div class="a" style="left:631px;top:266px;width:577px;height:351px;border:1.5px solid #000;background:#fff"></div>
<!-- IMAGE -->
<div class="a" style="left:631px;top:622px;width:577px;height:350px;background:#aeb3ba"></div>
<div class="a" style="left:631px;top:622px;width:577px;height:1px;background:#6a7f97"></div>
<div class="a" style="left:631px;top:971px;width:577px;height:1px;background:#6a7f97"></div>
<div class="a" style="left:631px;top:622px;width:1px;height:350px;background:#6a7f97"></div>
<div class="a" style="left:1207px;top:622px;width:1px;height:350px;background:#6a7f97"></div>
<div class="a" style="left:635px;top:626px;width:568px;height:342px;background:#fff;overflow:hidden">
<div class="a" style="left:0px;top:0px;width:568px;height:25px;background:#f3f3f3;"></div>
<div class="a" style="left:0px;top:25px;width:568px;height:1px;background:#dddddd;"></div>
<div class="a" style="left:4px;top:2px;width:15px;height:15px;background:#9a8ef0;border-radius:2px"></div>
<svg style="left:6px;top:4px" width="11" height="11" viewBox="0 0 11 11"><path d="M2.3 1.2c.5-.4 1.1-.3 1.4.2l1 1.6c.3.5.1 1-.3 1.3l-.6.4c.5 1.2 1.4 2.1 2.6 2.6l.4-.6c.3-.4.8-.6 1.3-.3l1.6 1c.5.3.6.9.2 1.4l-.7.8c-.5.5-1.3.7-2 .4C4.7 9.1 1.9 6.3 .9 3.8c-.3-.7-.1-1.5.4-2z" fill="#fff"/></svg>
<div class="a" style="left:24px;top:1.5px;font-size:5.8px;line-height:10px;color:#6b6b6b;font-weight:400;white-space:nowrap;">Profile Update Request</div>
<div class="a" style="left:24px;top:9.5px;font-size:8px;line-height:10px;color:#181818;font-weight:700;white-space:nowrap;">REQ-000035</div>
<div class="a" style="left:5px;top:29px;width:557px;height:13px;background:#f3f3f3;border-radius:2px"></div>
<svg style="left:8px;top:31.5px" width="9" height="8"><path d="M1 2.5L4.5 6L8 2.5" stroke="#706e6b" stroke-width="1" fill="none"/></svg>
<div class="a" style="left:20px;top:30.5px;font-size:7.25px;line-height:10px;color:#3e3e3c;font-weight:400;white-space:nowrap;">General Information</div>
<div class="a" style="left:5px;top:189px;width:557px;height:13px;background:#f3f3f3;border-radius:2px"></div>
<svg style="left:8px;top:191.5px" width="9" height="8"><path d="M1 2.5L4.5 6L8 2.5" stroke="#706e6b" stroke-width="1" fill="none"/></svg>
<div class="a" style="left:20px;top:190.5px;font-size:7.25px;line-height:10px;color:#3e3e3c;font-weight:400;white-space:nowrap;">Contact Information</div>
<div class="a" style="left:5px;top:301px;width:557px;height:14px;background:#f3f3f3;border-radius:2px"></div>
<svg style="left:8px;top:304.0px" width="9" height="8"><path d="M1 2.5L4.5 6L8 2.5" stroke="#706e6b" stroke-width="1" fill="none"/></svg>
<div class="a" style="left:20px;top:303.0px;font-size:7.25px;line-height:10px;color:#3e3e3c;font-weight:400;white-space:nowrap;">Home Address</div>
<div class="a" style="left:11px;top:48.7px;font-size:5.4px;line-height:10px;color:#5a5a5a;font-weight:400;white-space:nowrap;">Request Id</div>
<div class="a" style="left:11px;top:58.2px;font-size:6.3px;line-height:10px;color:#181818;font-weight:400;white-space:nowrap;">REQ-000035</div>
<div class="a" style="left:10px;top:68px;width:268px;height:1px;background:#e3e3e3;"></div>
<div class="a" style="left:291px;top:48.7px;font-size:5.4px;line-height:10px;color:#5a5a5a;font-weight:400;white-space:nowrap;">Company</div>
<svg style="left:547.5px;top:57.7px" width="8" height="8"><path d="M1.5 6.5L6.5 1.5" stroke="#6b6b6b" stroke-width="1.5" stroke-linecap="round"/><path d="M1 7L1.6 5.8L2.2 6.4Z" fill="#6b6b6b"/></svg>
<div class="a" style="left:11px;top:70.4px;font-size:5.4px;line-height:10px;color:#5a5a5a;font-weight:400;white-space:nowrap;">Account</div>
<div class="a" style="left:11px;top:81.5px;font-size:6.3px;line-height:10px;color:#0b5cab;font-weight:400;white-space:nowrap;">Test Ahmad</div>
<div class="a" style="left:10px;top:91.5px;width:268px;height:1px;background:#e3e3e3;"></div>
<div class="a" style="left:288px;top:68px;width:273px;height:25px;border:2px solid #e8733a;"></div>
<div class="a" style="left:291px;top:70.4px;font-size:5.4px;line-height:10px;color:#5a5a5a;font-weight:400;white-space:nowrap;">Status</div>
<div class="a" style="left:291px;top:81.0px;font-size:6.3px;line-height:10px;color:#181818;font-weight:400;white-space:nowrap;">Submitted</div>
<svg style="left:547.5px;top:80.0px" width="8" height="8"><path d="M1.5 6.5L6.5 1.5" stroke="#6b6b6b" stroke-width="1.5" stroke-linecap="round"/><path d="M1 7L1.6 5.8L2.2 6.4Z" fill="#6b6b6b"/></svg>
<div class="a" style="left:11px;top:93.5px;font-size:5.4px;line-height:10px;color:#5a5a5a;font-weight:400;white-space:nowrap;">Reason</div>
<div class="a" style="left:11px;top:103.5px;font-size:6.3px;line-height:10px;color:#181818;font-weight:400;white-space:nowrap;">Address change request</div>
<div class="a" style="left:10px;top:114px;width:268px;height:1px;background:#e3e3e3;"></div>
<svg style="left:269.0px;top:103.3px" width="8" height="8"><path d="M1.5 6.5L6.5 1.5" stroke="#6b6b6b" stroke-width="1.5" stroke-linecap="round"/><path d="M1 7L1.6 5.8L2.2 6.4Z" fill="#6b6b6b"/></svg>
<div class="a" style="left:291px;top:115.3px;font-size:5.4px;line-height:10px;color:#5a5a5a;font-weight:400;white-space:nowrap;">First Name</div>
<div class="a" style="left:291px;top:125.5px;font-size:6.3px;line-height:10px;color:#181818;font-weight:400;white-space:nowrap;">Test</div>
<div class="a" style="left:289px;top:135.5px;width:269px;height:1px;background:#e3e3e3;"></div>
<svg style="left:547.5px;top:124.6px" width="8" height="8"><path d="M1.5 6.5L6.5 1.5" stroke="#6b6b6b" stroke-width="1.5" stroke-linecap="round"/><path d="M1 7L1.6 5.8L2.2 6.4Z" fill="#6b6b6b"/></svg>
<div class="a" style="left:11px;top:137.8px;font-size:5.4px;line-height:10px;color:#5a5a5a;font-weight:400;white-space:nowrap;">Old First Name</div>
<div class="a" style="left:11px;top:147.3px;font-size:6.3px;line-height:10px;color:#181818;font-weight:400;white-space:nowrap;">Test</div>
<div class="a" style="left:10px;top:158.29999999999995px;width:268px;height:1px;background:#e3e3e3;"></div>
<svg style="left:269.0px;top:147.4px" width="8" height="8"><path d="M1.5 6.5L6.5 1.5" stroke="#6b6b6b" stroke-width="1.5" stroke-linecap="round"/><path d="M1 7L1.6 5.8L2.2 6.4Z" fill="#6b6b6b"/></svg>
<div class="a" style="left:291px;top:137.8px;font-size:5.4px;line-height:10px;color:#5a5a5a;font-weight:400;white-space:nowrap;">Last Name</div>
<div class="a" style="left:291px;top:147.5px;font-size:6.3px;line-height:10px;color:#181818;font-weight:400;white-space:nowrap;">Ahmad</div>
<div class="a" style="left:289px;top:158.29999999999995px;width:269px;height:1px;background:#e3e3e3;"></div>
<svg style="left:547.5px;top:147.0px" width="8" height="8"><path d="M1.5 6.5L6.5 1.5" stroke="#6b6b6b" stroke-width="1.5" stroke-linecap="round"/><path d="M1 7L1.6 5.8L2.2 6.4Z" fill="#6b6b6b"/></svg>
<div class="a" style="left:11px;top:159.6px;font-size:5.4px;line-height:10px;color:#5a5a5a;font-weight:400;white-space:nowrap;">Old Last Name</div>
<div class="a" style="left:11px;top:169.7px;font-size:6.3px;line-height:10px;color:#181818;font-weight:400;white-space:nowrap;">Ahmad</div>
<div class="a" style="left:10px;top:180.29999999999995px;width:268px;height:1px;background:#e3e3e3;"></div>
<svg style="left:269.0px;top:169.4px" width="8" height="8"><path d="M1.5 6.5L6.5 1.5" stroke="#6b6b6b" stroke-width="1.5" stroke-linecap="round"/><path d="M1 7L1.6 5.8L2.2 6.4Z" fill="#6b6b6b"/></svg>
<div class="a" style="left:11px;top:208.0px;font-size:5.4px;line-height:10px;color:#5a5a5a;font-weight:400;white-space:nowrap;">Old Email</div>
<div class="a" style="left:11px;top:217.8px;font-size:6.3px;line-height:10px;color:#0b5cab;font-weight:400;white-space:nowrap;">ishann.tforce@gmail.com</div>
<div class="a" style="left:10px;top:228.5px;width:268px;height:1px;background:#e3e3e3;"></div>
<svg style="left:269.0px;top:217.6px" width="8" height="8"><path d="M1.5 6.5L6.5 1.5" stroke="#6b6b6b" stroke-width="1.5" stroke-linecap="round"/><path d="M1 7L1.6 5.8L2.2 6.4Z" fill="#6b6b6b"/></svg>
<div class="a" style="left:291px;top:208.0px;font-size:5.4px;line-height:10px;color:#5a5a5a;font-weight:400;white-space:nowrap;">Email</div>
<div class="a" style="left:291px;top:217.8px;font-size:6.3px;line-height:10px;color:#0b5cab;font-weight:400;white-space:nowrap;">ishann.tforce@gmail.com</div>
<div class="a" style="left:289px;top:228.5px;width:269px;height:1px;background:#e3e3e3;"></div>
<svg style="left:547.5px;top:217.6px" width="8" height="8"><path d="M1.5 6.5L6.5 1.5" stroke="#6b6b6b" stroke-width="1.5" stroke-linecap="round"/><path d="M1 7L1.6 5.8L2.2 6.4Z" fill="#6b6b6b"/></svg>
<div class="a" style="left:11px;top:230.2px;font-size:5.4px;line-height:10px;color:#5a5a5a;font-weight:400;white-space:nowrap;">Old Cell Phone</div>
<div class="a" style="left:10px;top:249.39999999999998px;width:268px;height:1px;background:#e3e3e3;"></div>
<svg style="left:269.0px;top:239.9px" width="8" height="8"><path d="M1.5 6.5L6.5 1.5" stroke="#6b6b6b" stroke-width="1.5" stroke-linecap="round"/><path d="M1 7L1.6 5.8L2.2 6.4Z" fill="#6b6b6b"/></svg>
<div class="a" style="left:291px;top:230.2px;font-size:5.4px;line-height:10px;color:#5a5a5a;font-weight:400;white-space:nowrap;">Cell Phone</div>
<div class="a" style="left:289px;top:249.39999999999998px;width:269px;height:1px;background:#e3e3e3;"></div>
<svg style="left:547.5px;top:239.9px" width="8" height="8"><path d="M1.5 6.5L6.5 1.5" stroke="#6b6b6b" stroke-width="1.5" stroke-linecap="round"/><path d="M1 7L1.6 5.8L2.2 6.4Z" fill="#6b6b6b"/></svg>
<div class="a" style="left:11px;top:251.2px;font-size:5.4px;line-height:10px;color:#5a5a5a;font-weight:400;white-space:nowrap;">Old Home Phone</div>
<div class="a" style="left:10px;top:271.29999999999995px;width:268px;height:1px;background:#e3e3e3;"></div>
<svg style="left:269.0px;top:261.1px" width="8" height="8"><path d="M1.5 6.5L6.5 1.5" stroke="#6b6b6b" stroke-width="1.5" stroke-linecap="round"/><path d="M1 7L1.6 5.8L2.2 6.4Z" fill="#6b6b6b"/></svg>
<div class="a" style="left:291px;top:251.2px;font-size:5.4px;line-height:10px;color:#5a5a5a;font-weight:400;white-space:nowrap;">Home Phone</div>
<div class="a" style="left:289px;top:271.29999999999995px;width:269px;height:1px;background:#e3e3e3;"></div>
<svg style="left:547.5px;top:261.1px" width="8" height="8"><path d="M1.5 6.5L6.5 1.5" stroke="#6b6b6b" stroke-width="1.5" stroke-linecap="round"/><path d="M1 7L1.6 5.8L2.2 6.4Z" fill="#6b6b6b"/></svg>
<div class="a" style="left:11px;top:272.8px;font-size:5.4px;line-height:10px;color:#5a5a5a;font-weight:400;white-space:nowrap;">Old Work Phone</div>
<div class="a" style="left:10px;top:292.20000000000005px;width:268px;height:1px;background:#e3e3e3;"></div>
<svg style="left:269.0px;top:282.6px" width="8" height="8"><path d="M1.5 6.5L6.5 1.5" stroke="#6b6b6b" stroke-width="1.5" stroke-linecap="round"/><path d="M1 7L1.6 5.8L2.2 6.4Z" fill="#6b6b6b"/></svg>
<div class="a" style="left:291px;top:272.8px;font-size:5.4px;line-height:10px;color:#5a5a5a;font-weight:400;white-space:nowrap;">Work Phone</div>
<div class="a" style="left:289px;top:292.20000000000005px;width:269px;height:1px;background:#e3e3e3;"></div>
<svg style="left:547.5px;top:282.6px" width="8" height="8"><path d="M1.5 6.5L6.5 1.5" stroke="#6b6b6b" stroke-width="1.5" stroke-linecap="round"/><path d="M1 7L1.6 5.8L2.2 6.4Z" fill="#6b6b6b"/></svg>
<div class="a" style="left:11px;top:320.4px;font-size:5.4px;line-height:10px;color:#5a5a5a;font-weight:400;white-space:nowrap;">Old Street</div>
<div class="a" style="left:11px;top:330.9px;font-size:6.3px;line-height:10px;color:#181818;font-weight:400;white-space:nowrap;">1234154</div>
<svg style="left:269.0px;top:330.5px" width="8" height="8"><path d="M1.5 6.5L6.5 1.5" stroke="#6b6b6b" stroke-width="1.5" stroke-linecap="round"/><path d="M1 7L1.6 5.8L2.2 6.4Z" fill="#6b6b6b"/></svg>
<div class="a" style="left:291px;top:320.4px;font-size:5.4px;line-height:10px;color:#5a5a5a;font-weight:400;white-space:nowrap;">Street</div>
<div class="a" style="left:291px;top:330.9px;font-size:6.3px;line-height:10px;color:#181818;font-weight:400;white-space:nowrap;">new street 991B</div>
<svg style="left:547.5px;top:330.5px" width="8" height="8"><path d="M1.5 6.5L6.5 1.5" stroke="#6b6b6b" stroke-width="1.5" stroke-linecap="round"/><path d="M1 7L1.6 5.8L2.2 6.4Z" fill="#6b6b6b"/></svg>
</div>
<div class="a" style="left:915px;top:598px;width:9px;height:9px;border-radius:50%;background:#1a6ee0"></div>
<div class="a" style="left:919px;top:603px;width:1.3px;height:17px;background:#2a64c0"></div>
<div class="a" style="left:916px;top:619px;width:7px;height:3px;background:#1a6ee0"></div>
<div class="a" style="left:916px;top:972px;width:7px;height:4px;background:#1a6ee0"></div>
<div class="a" style="left:628px;top:619px;width:7px;height:7px;background:#1a6ee0"></div>
<div class="a" style="left:1204px;top:619px;width:7px;height:7px;background:#1a6ee0"></div>
<div class="a" style="left:628px;top:969px;width:7px;height:7px;background:#1a6ee0"></div>
<div class="a" style="left:1204px;top:969px;width:7px;height:7px;background:#1a6ee0"></div>
<div class="a" style="left:628px;top:794px;width:4px;height:7px;background:#1a6ee0"></div>
<div class="a" style="left:1206px;top:794px;width:5px;height:7px;background:#1a6ee0"></div>
<svg style="left:632px;top:623px" width="18" height="18"><path d="M0 18V0H18V3H3V18Z" fill="#000" stroke="#fff" stroke-width="1.5" paint-order="stroke"/></svg>
<svg style="left:1188px;top:623px" width="18" height="18"><path d="M0 0H18V18H15V3H0Z" fill="#000" stroke="#fff" stroke-width="1.5" paint-order="stroke"/></svg>
<svg style="left:632px;top:953px" width="18" height="18"><path d="M0 0H3V15H18V18H0Z" fill="#000" stroke="#fff" stroke-width="1.5" paint-order="stroke"/></svg>
<svg style="left:1188px;top:953px" width="18" height="18"><path d="M18 0V18H0V15H15V0Z" fill="#000" stroke="#fff" stroke-width="1.5" paint-order="stroke"/></svg>
<div class="a" style="left:910px;top:623px;width:18px;height:3px;background:#000;box-shadow:0 0 0 1px #fff"></div>
<div class="a" style="left:910px;top:968px;width:18px;height:3px;background:#000;box-shadow:0 0 0 1px #fff"></div>
<div class="a" style="left:632px;top:788px;width:3px;height:18px;background:#000;box-shadow:0 0 0 1px #fff"></div>
<div class="a" style="left:1203px;top:788px;width:3px;height:18px;background:#000;box-shadow:0 0 0 1px #fff"></div>
<!-- /IMAGE -->
<!-- scrollbar & side toggle -->
<div class="a" style="left:1908px;top:832px;width:8px;height:69px;border-radius:4px;background:#dadce0"></div>
<div class="a" style="left:1897px;top:984px;width:40px;height:40px;border-radius:20px;background:#fff;box-shadow:0 1px 3px rgba(60,64,67,.3),0 1px 2px rgba(60,64,67,.15)"></div>
<svg style="left:1903px;top:996px" width="14" height="16"><path d="M9.5 3L4.5 8L9.5 13" stroke="#444746" stroke-width="1.8" fill="none"/></svg>
<!-- TASKBAR -->
<div class="a" style="left:0;top:1032px;width:1920px;height:48px;background:#1f1f1f"></div>
<div class="a" style="left:0;top:1032px;width:1920px;height:1px;background:#2c2c2c"></div>
<!-- weather -->
<div class="a" style="left:21px;top:1045px;width:20px;height:20px;border-radius:10px;background:linear-gradient(135deg,#ffc81a 0%,#f9a800 45%,#ea6200 100%)"></div>
<div class="a" style="left:51px;top:1041px;font-size:11.5px;line-height:14px;color:#fff;font-weight:700">73°F</div>
<div class="a" style="left:51px;top:1057px;font-size:11.7px;line-height:14px;color:#d6d6d6">Sunny</div>
<!-- start -->
<div class="a" style="left:507px;top:1044px;width:11px;height:11px;background:linear-gradient(135deg,#8fe4ff,#3ab8f5)"></div>
<div class="a" style="left:519px;top:1044px;width:11px;height:11px;background:linear-gradient(135deg,#6ad3fb,#1fa3ee)"></div>
<div class="a" style="left:507px;top:1056px;width:11px;height:11px;background:linear-gradient(135deg,#5ccdfa,#1b9cea)"></div>
<div class="a" style="left:519px;top:1056px;width:11px;height:11px;background:linear-gradient(135deg,#39b7f5,#0f86dc)"></div>
<!-- search pill -->
<div class="a" style="left:543px;top:1040px;width:220px;height:32px;border-radius:16px;background:#333333;border:1px solid #414141"></div>
<svg style="left:553px;top:1047px" width="20" height="20"><circle cx="8.5" cy="8.5" r="5.8" stroke="#dcdcdc" stroke-width="1.6" fill="none"/><path d="M12.8 12.8L17 17" stroke="#dcdcdc" stroke-width="1.8"/></svg>
<div class="a" style="left:580px;top:1048px;font-size:13px;line-height:16px;color:#e6e6e6">Search</div>
<div class="a" style="left:722px;top:1043px;width:22px;height:22px;border-radius:11px;background:radial-gradient(circle at 40% 35%,#ffe08a,#f0b84a 70%,#e08a3a)"></div>
<svg style="left:713px;top:1055px" width="44" height="15" viewBox="0 0 44 15"><path d="M1 10L4 4L6 9L8 2L10 9L12 5L14 10Z" fill="#3858c8"/><path d="M30 10L32 3L34 9L36 1L38 8L40 4L43 10Z" fill="#3858c8"/><path d="M0 12Q22 6 44 11Q40 15 22 14Q6 15 0 12Z" fill="#d8dff0"/><path d="M20 12Q32 8 44 11Q40 15 22 14Z" fill="#4a66b8"/></svg>
<!-- task view -->
<div class="a" style="left:775px;top:1051px;width:18px;height:16px;border-radius:2px;background:#6a6a6a"></div>
<div class="a" style="left:781px;top:1045px;width:18px;height:16px;border-radius:2px;background:linear-gradient(#ffffff,#d4d4d4)"></div>
<!-- meet/teams bubble -->
<svg style="left:818px;top:1044px" width="25" height="24" viewBox="0 0 25 24"><path d="M12.5 1A11 11 0 1 1 6 20.5L1 23L3 17.5A11 11 0 0 1 12.5 1Z" fill="#6b62d6"/><rect x="6" y="8" width="9.5" height="8.5" rx="1.3" fill="#fff"/><path d="M15.5 11L19.5 8.5V16L15.5 13.5Z" fill="#fff"/></svg>
<!-- explorer -->
<svg style="left:862px;top:1044px" width="26" height="24" viewBox="0 0 26 24"><path d="M1 2.5Q1 1 2.5 1H9L11 3H24Q25 3 25 4.5V22Q25 23 24 23H2Q1 23 1 22Z" fill="#e8b320"/><rect x="1" y="5" width="24" height="18" rx="1" fill="#ffd44f"/><rect x="6" y="15.5" width="14" height="7.5" rx="1.5" fill="#1d7ad6"/><rect x="9" y="18" width="8" height="1.3" fill="#0c4f9e"/></svg>
<!-- edge -->
<svg style="left:906px;top:1043px" width="26" height="26" viewBox="0 0 26 26"><defs><linearGradient id="eg1" x1="0" y1="0" x2="0" y2="1"><stop offset="0" stop-color="#38c0f0"/><stop offset="1" stop-color="#1069c8"/></linearGradient><linearGradient id="eg2" x1="0" y1="0" x2="1" y2="1"><stop offset="0" stop-color="#27b4e8"/><stop offset=".6" stop-color="#52d07a"/><stop offset="1" stop-color="#6fdc6a"/></linearGradient></defs><circle cx="13" cy="13" r="12" fill="url(#eg1)"/><path d="M13 1A12 12 0 0 1 25 13Q25 17 21 17.5Q18 17.5 17.5 14Q17 9 12 8.5Q6 8.3 3.2 12A12 12 0 0 1 13 1Z" fill="url(#eg2)"/><path d="M2 15Q3 24 13 25Q20 25 23 20Q18 22.5 14 21Q9 19 9.5 14Q6 13.5 2 15Z" fill="#0b53a0"/><ellipse cx="14.6" cy="14.2" rx="3.6" ry="3" fill="#1c1c1c"/></svg>
<!-- firefox -->
<svg style="left:950px;top:1043px" width="26" height="26" viewBox="0 0 26 26"><defs><radialGradient id="ffg" cx=".6" cy=".25" r=".9"><stop offset="0" stop-color="#ffe03a"/><stop offset=".45" stop-color="#ff8a1f"/><stop offset=".8" stop-color="#f2294e"/><stop offset="1" stop-color="#d4136a"/></radialGradient></defs><path d="M13 25A11.5 11.5 0 0 1 2.5 9C3.5 7 4.5 5.5 5 5Q5 8 6.5 9Q8 4 12 3Q10 6 13 6Q17 6 17 2Q23 5 24 12A11.5 11.5 0 0 1 13 25Z" fill="url(#ffg)"/><circle cx="13" cy="14" r="5" fill="#7b3bd1"/><path d="M8 12Q10 9 14 10Q18 11 18 15Q17 10 13 11Q9 11 8 12Z" fill="#ff9a2a"/></svg>
<!-- chrome active -->
<div class="a" style="left:987px;top:1036px;width:39px;height:40px;border-radius:5px;background:#2b2b2b;border:1px solid #333"></div>
<div class="a" style="left:999px;top:1072px;width:16px;height:3px;border-radius:2px;background:#4cc2ff"></div>
<svg style="left:995px;top:1044px" width="24" height="24" viewBox="0 0 24 24"><path d="M12 12L2.4 6.5A11 11 0 0 1 21.6 6.5Z" fill="#db4437"/><path d="M12 1A11 11 0 0 1 21.6 6.5H12Z" fill="#db4437"/><path d="M2.4 6.5L7.2 14.8L12 23A11 11 0 0 1 2.4 6.5Z" fill="#0f9d58"/><path d="M2.4 6.5L12 12L12 23A11 11 0 0 1 2.4 6.5Z" fill="#0f9d58"/><path d="M21.6 6.5A11 11 0 0 1 12 23L16.8 14.8Z" fill="#f4b400"/><path d="M12 12L21.6 6.5A11 11 0 0 1 12 23Z" fill="#f4b400"/><path d="M12 6.5H21.6L16.8 14.8Z" fill="#db4437"/><path d="M7.2 14.8L12 23L2.4 6.5Z" fill="#0f9d58"/><circle cx="12" cy="12" r="5.2" fill="#fff"/><circle cx="12" cy="12" r="4.2" fill="#4285f4"/></svg>
<div class="a" style="left:1009px;top:1040px;width:15px;height:15px;border-radius:8px;background:#e0ddd8;overflow:hidden"><div class="a" style="left:4px;top:2px;width:7px;height:9px;border-radius:4px;background:#7a5a48"></div><div class="a" style="left:4px;top:1px;width:7px;height:4px;border-radius:4px 4px 1px 1px;background:#151210"></div><div class="a" style="left:1px;top:11px;width:13px;height:6px;border-radius:6px 6px 0 0;background:#b8cfdc"></div></div>
<svg style="left:1039px;top:1044px" width="24" height="24" viewBox="0 0 24 24"><path d="M12 12L2.4 6.5A11 11 0 0 1 21.6 6.5Z" fill="#db4437"/><path d="M12 1A11 11 0 0 1 21.6 6.5H12Z" fill="#db4437"/><path d="M2.4 6.5L7.2 14.8L12 23A11 11 0 0 1 2.4 6.5Z" fill="#0f9d58"/><path d="M2.4 6.5L12 12L12 23A11 11 0 0 1 2.4 6.5Z" fill="#0f9d58"/><path d="M21.6 6.5A11 11 0 0 1 12 23L16.8 14.8Z" fill="#f4b400"/><path d="M12 12L21.6 6.5A11 11 0 0 1 12 23Z" fill="#f4b400"/><path d="M12 6.5H21.6L16.8 14.8Z" fill="#db4437"/><path d="M7.2 14.8L12 23L2.4 6.5Z" fill="#0f9d58"/><circle cx="12" cy="12" r="5.2" fill="#fff"/><circle cx="12" cy="12" r="4.2" fill="#4285f4"/></svg>
<div class="a" style="left:1052px;top:1044px;width:10px;height:10px;border-radius:2px;background:#222;transform:rotate(20deg);border:1px solid #666"></div>
<svg style="left:1083px;top:1044px" width="24" height="24" viewBox="0 0 24 24"><path d="M12 12L2.4 6.5A11 11 0 0 1 21.6 6.5Z" fill="#db4437"/><path d="M12 1A11 11 0 0 1 21.6 6.5H12Z" fill="#db4437"/><path d="M2.4 6.5L7.2 14.8L12 23A11 11 0 0 1 2.4 6.5Z" fill="#0f9d58"/><path d="M2.4 6.5L12 12L12 23A11 11 0 0 1 2.4 6.5Z" fill="#0f9d58"/><path d="M21.6 6.5A11 11 0 0 1 12 23L16.8 14.8Z" fill="#f4b400"/><path d="M12 12L21.6 6.5A11 11 0 0 1 12 23Z" fill="#f4b400"/><path d="M12 6.5H21.6L16.8 14.8Z" fill="#db4437"/><path d="M7.2 14.8L12 23L2.4 6.5Z" fill="#0f9d58"/><circle cx="12" cy="12" r="5.2" fill="#fff"/><circle cx="12" cy="12" r="4.2" fill="#4285f4"/></svg>
<div class="a" style="left:1097px;top:1039px;width:16px;height:16px;border-radius:8px;background:#c2185b;color:#fff;font-size:10px;line-height:16px;text-align:center">S</div>
<div class="a" style="left:1092px;top:1072px;width:7px;height:3px;border-radius:2px;background:#9e9e9e"></div>
<!-- resource monitor -->
<div class="a" style="left:1127px;top:1047px;width:24px;height:18px;background:#d8e6f0;border:1px solid #c0c8cf"></div>
<svg style="left:1128px;top:1048px" width="22" height="16" viewBox="0 0 22 16"><path d="M0 12L3 9L5 4L7 10L9 11L12 12L14 5L16 10L19 12L22 11V16H0Z" fill="#8ec6ec" stroke="#2e8ad0" stroke-width=".8"/></svg>
<!-- cmd -->
<div class="a" style="left:1171px;top:1046px;width:23px;height:19px;background:#000;border:1px solid #9a9a9a"></div>
<div class="a" style="left:1171px;top:1046px;width:23px;height:2px;background:#bdbdbd"></div>
<div class="a" style="left:1174px;top:1049px;font-size:6px;line-height:7px;color:#ddd;font-family:'Liberation Mono'">C:\_</div>
<!-- pgadmin elephant -->
<svg style="left:1214px;top:1043px" width="26" height="26" viewBox="0 0 26 26"><path d="M6 3Q13 0 20 3Q25 5 24 11Q23 15 20 15Q19 19 17 24Q15 26 14 22Q13 18 12 19Q11 22 9 21Q7 19 7 15Q2 13 2 8Q2 4 6 3Z" fill="#336791" stroke="#fff" stroke-width="1"/><path d="M11 8Q11 14 14 16" stroke="#fff" stroke-width=".8" fill="none"/><circle cx="18" cy="7.5" r=".8" fill="#fff"/></svg>
<!-- vscode -->
<svg style="left:1258px;top:1044px" width="25" height="24" viewBox="0 0 25 24"><path d="M18 1L24 4V20L18 23L7 13L3 16L1 15V9L3 8L7 11Z" fill="#1f9cf0"/><path d="M18 6V18L10 12Z" fill="#1c1c1c"/><path d="M18 1L24 4V20L18 23Z" fill="#0f7bd0"/></svg>
<!-- pycharm -->
<div class="a" style="left:1303px;top:1044px;width:25px;height:24px;background:linear-gradient(135deg,#21d789 0%,#07c3f2 30%,#21d789 60%,#fcf84a 100%);border-radius:3px"></div>
<div class="a" style="left:1307px;top:1048px;width:17px;height:17px;background:#000"></div>
<div class="a" style="left:1308px;top:1049px;font-size:8.5px;line-height:9px;color:#fff;font-weight:700">PC</div>
<div class="a" style="left:1309px;top:1061px;width:6px;height:1.3px;background:#fff"></div>
<!-- git -->
<svg style="left:1346px;top:1043px" width="26" height="26" viewBox="0 0 26 26"><path d="M13 1L19 7L13 13L7 7Z" fill="#f08080"/><path d="M19 7L25 13L19 19L13 13Z" fill="#6dcf6d"/><path d="M13 13L19 19L13 25L7 19Z" fill="#ffd866"/><path d="M7 7L13 13L7 19L1 13Z" fill="#6aa0f0"/><path d="M10 4L13 13L19 14M13 13V19" stroke="#222" stroke-width="1.2" fill="none"/><circle cx="19" cy="14" r="1.6" fill="#222"/><circle cx="13" cy="19" r="1.6" fill="#222"/></svg>
<!-- taskpro -->
<div class="a" style="left:1391px;top:1044px;width:24px;height:24px;background:#fff"></div>
<div class="a" style="left:1396px;top:1047px;width:14px;height:10px;border:1.5px solid #1e88c8;border-radius:1px;background:#e8f4fb"></div>
<div class="a" style="left:1400px;top:1057px;width:6px;height:2px;background:#1e88c8"></div>
<div class="a" style="left:1393px;top:1060px;font-size:4px;line-height:5px;color:#333">TaskPro</div>
<div class="a" style="left:1400px;top:1072px;width:7px;height:3px;border-radius:2px;background:#9e9e9e"></div>
<!-- tray -->
<svg style="left:1670px;top:1049px" width="14" height="12"><path d="M2 9L7 4L12 9" stroke="#fff" stroke-width="1.5" fill="none"/></svg>
<svg style="left:1698px;top:1047px" width="22" height="16" viewBox="0 0 22 16"><path d="M5 14A4 4 0 0 1 4.5 6.2A5.5 5.5 0 0 1 14.5 5A4.5 4.5 0 0 1 17.5 14Z" fill="#c9c9c9"/></svg>
<svg style="left:1732px;top:1049px" width="18" height="13" viewBox="0 0 18 13"><rect x=".8" y=".8" width="16.4" height="11.4" rx="1.5" stroke="#fff" stroke-width="1.3" fill="none"/><path d="M3.5 4H5M7 4H8.5M10 4H11.5M13 4H14.5M3.5 6.5H5M7 6.5H8.5M10 6.5H11.5M13 6.5H14.5M5 9H13" stroke="#fff" stroke-width="1.1"/></svg>
<svg style="left:1763px;top:1046px" width="20" height="18" viewBox="0 0 20 18"><path d="M1.5 6.5A12 12 0 0 1 18.5 6.5M4 9.2A8.5 8.5 0 0 1 16 9.2M6.5 12A5 5 0 0 1 13.5 12" stroke="#fff" stroke-width="1.4" fill="none"/><circle cx="10" cy="14.8" r="1.3" fill="#fff"/></svg>
<svg style="left:1788px;top:1046px" width="20" height="18" viewBox="0 0 20 18"><path d="M1.5 6.5H4.5L9 2.5V15.5L4.5 11.5H1.5Z" stroke="#fff" stroke-width="1.3" fill="none" stroke-linejoin="round"/><path d="M11.5 6.5Q13 9 11.5 11.5M14 4.5Q17 9 14 13.5M16.5 2.5Q20.5 9 16.5 15.5" stroke="#fff" stroke-width="1.3" fill="none"/></svg>
<div class="a" style="left:1826px;top:1041px;font-size:12px;line-height:14px;color:#fff">11:39 AM</div>
<div class="a" style="left:1821px;top:1057px;font-size:12.3px;line-height:14px;color:#fff">12/4/2025</div>
<svg style="left:1883px;top:1046px" width="18" height="19" viewBox="0 0 18 19"><path d="M9 1A5.5 5.5 0 0 1 14.5 6.5V11L16.5 14H1.5L3.5 11V6.5A5.5 5.5 0 0 1 9 1Z" fill="#60cdff"/><path d="M6.5 15.5A2.5 2.5 0 0 0 11.5 15.5Z" fill="#60cdff"/></svg>



</body></html>
